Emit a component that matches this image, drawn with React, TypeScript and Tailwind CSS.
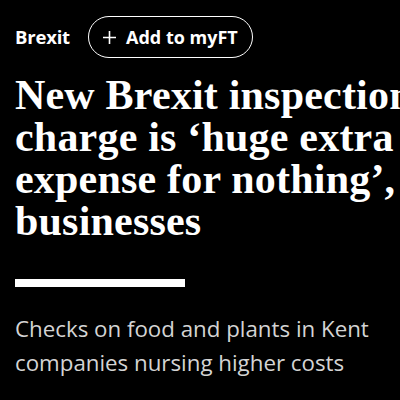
import React from 'react';

const App = () => {
  return (
    <div className="w-[400px] h-[400px] bg-black overflow-hidden text-white">
      <div className="pl-[15px] pt-4">
        {/* Topic row */}
        <div className="flex items-center gap-[18px]">
          <span className="font-['Open_Sans',sans-serif] font-bold text-[18.5px] tracking-[-0.2px]">Brexit</span>
          <button className="flex items-center justify-center gap-[10px] w-[165px] h-[42px] rounded-full border-[1.5px] border-white font-['Open_Sans',sans-serif] font-bold text-[18px]">
            <svg width="13" height="13" viewBox="0 0 13 13" fill="none" stroke="white" strokeWidth="1.6">
              <path d="M6.5 0v13M0 6.5h13" />
            </svg>
            <span>Add to myFT</span>
          </button>
        </div>

        {/* Headline */}
        <h1 className="mt-[16px] font-['Liberation_Serif',serif] font-bold text-[42px] leading-[42px] whitespace-nowrap tracking-[0.2px]">
          <span className="block">New Brexit inspection</span>
          <span className="block">charge is ‘huge extra</span>
          <span className="block">expense for nothing’, say</span>
          <span className="block">businesses</span>
        </h1>

        <div className="mt-[37px] w-[170px] h-[8px] bg-white" />

        {/* Standfirst */}
        <p className="mt-[25px] font-['Open_Sans',sans-serif] text-[22.3px] leading-[34px] text-[#d4d4d4] whitespace-nowrap">
          <span className="block">Checks on food and plants in Kent</span>
          <span className="block">companies nursing higher costs</span>
        </p>
      </div>
    </div>
  );
};

export default App;
